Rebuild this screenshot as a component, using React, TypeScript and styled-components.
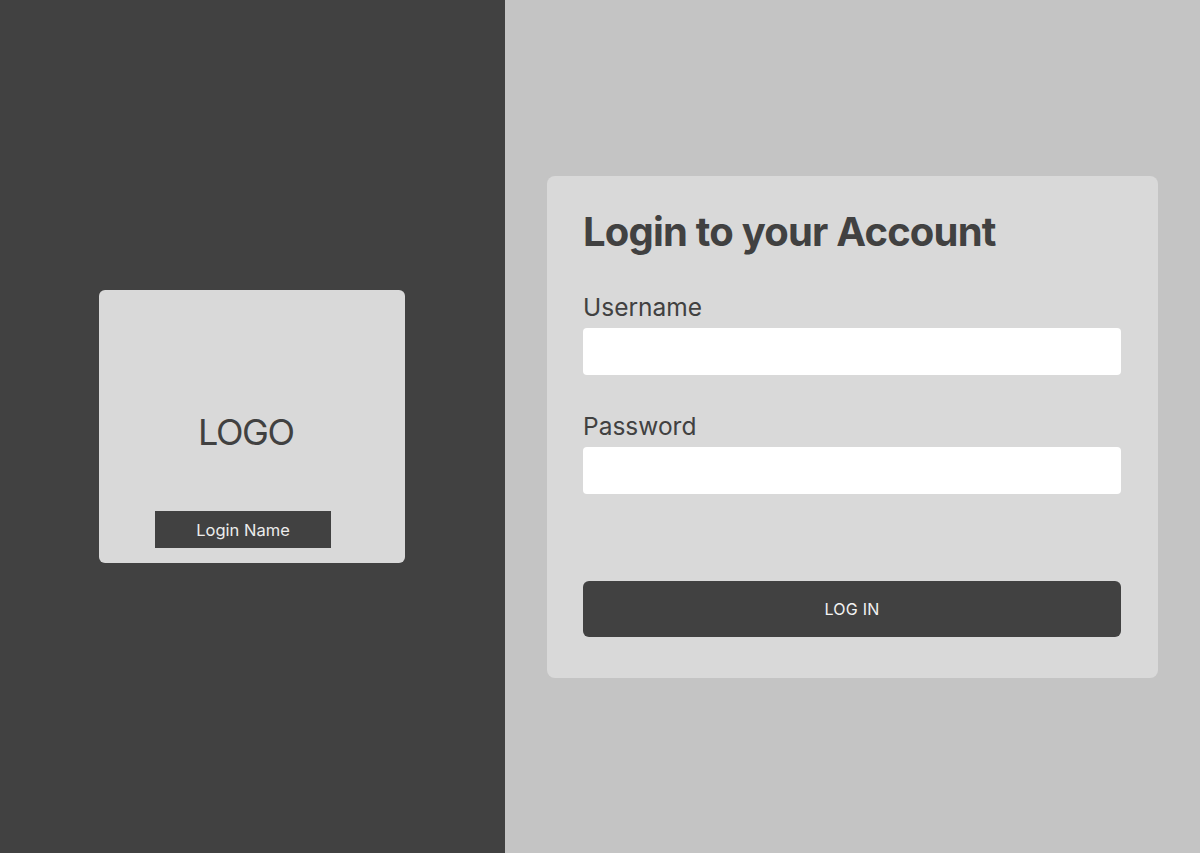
import React from "react";
import styled, { createGlobalStyle } from "styled-components";

const GlobalStyle = createGlobalStyle`
  html, body {
    margin: 0;
    padding: 0;
    height: 100%;
  }
  body {
    font-family: Inter, "Noto Sans", sans-serif;
    color: #414141;
  }
  * { box-sizing: border-box; }
`;

const Page = styled.div`
  display: grid;
  grid-template-columns: 505px 1fr;
  width: 1200px;
  height: 853px;
`;

const LeftPanel = styled.section`
  background: #414141;
  display: flex;
  align-items: center;
  justify-content: flex-start;
  padding-left: 99px;
`;

const RightPanel = styled.section`
  background: #c4c4c4;
  display: flex;
  align-items: center;
  justify-content: center;
`;

const LogoCard = styled.div`
  width: 306px;
  height: 273px;
  background: #d9d9d9;
  border-radius: 6px;
  display: flex;
  flex-direction: column;
  align-items: flex-start;
  padding: 124px 0 15px;
`;

const LogoText = styled.div`
  margin-left: 99px;
  font-size: 36px;
  line-height: 36px;
  font-weight: 400;
  color: #414141;
  letter-spacing: -1.4px;
`;

const NameTag = styled.div`
  margin-top: 61px;
  margin-left: 56px;
  width: 176px;
  height: 37px;
  background: #414141;
  color: #ececec;
  font-size: 16.5px;
  display: flex;
  align-items: center;
  justify-content: center;
`;

const LoginCard = styled.form`
  width: 611px;
  height: 502px;
  background: #d9d9d9;
  border-radius: 8px;
  padding: 32px 37px 40px 36px;
  display: flex;
  flex-direction: column;
`;

const Title = styled.h1`
  margin: 0 0 37px;
  font-size: 40px;
  line-height: 48px;
  font-weight: 700;
  color: #414141;
  letter-spacing: -0.8px;
`;

const Label = styled.label<{ $gap?: number }>`
  display: block;
  margin-top: ${(p) => p.$gap ?? 0}px;
  font-size: 24.5px;
  line-height: 29px;
  font-weight: 400;
  color: #414141;
`;

const Input = styled.input`
  display: block;
  margin-top: 6px;
  width: 538px;
  height: 47px;
  border: none;
  border-radius: 4px;
  background: #ffffff;
  outline: none;
  padding: 0 12px;
  font-family: inherit;
  font-size: 18px;
`;

const SubmitButton = styled.button`
  margin-top: 87px;
  width: 538px;
  height: 56px;
  border: none;
  border-radius: 6px;
  background: #414141;
  color: #f2f2f2;
  font-family: Inter, "Noto Sans", sans-serif;
  font-size: 16px;
  font-weight: 400;
  letter-spacing: 0.2px;
  cursor: pointer;
`;

export default function App() {
  return (
    <>
      <GlobalStyle />
      <Page>
        <LeftPanel>
          <LogoCard>
            <LogoText>LOGO</LogoText>
            <NameTag>Login Name</NameTag>
          </LogoCard>
        </LeftPanel>
        <RightPanel>
          <LoginCard onSubmit={(e) => e.preventDefault()}>
            <Title>Login to your Account</Title>
            <Label htmlFor="username">Username</Label>
            <Input id="username" type="text" />
            <Label htmlFor="password" $gap={37}>
              Password
            </Label>
            <Input id="password" type="password" />
            <SubmitButton type="submit">LOG IN</SubmitButton>
          </LoginCard>
        </RightPanel>
      </Page>
    </>
  );
}
